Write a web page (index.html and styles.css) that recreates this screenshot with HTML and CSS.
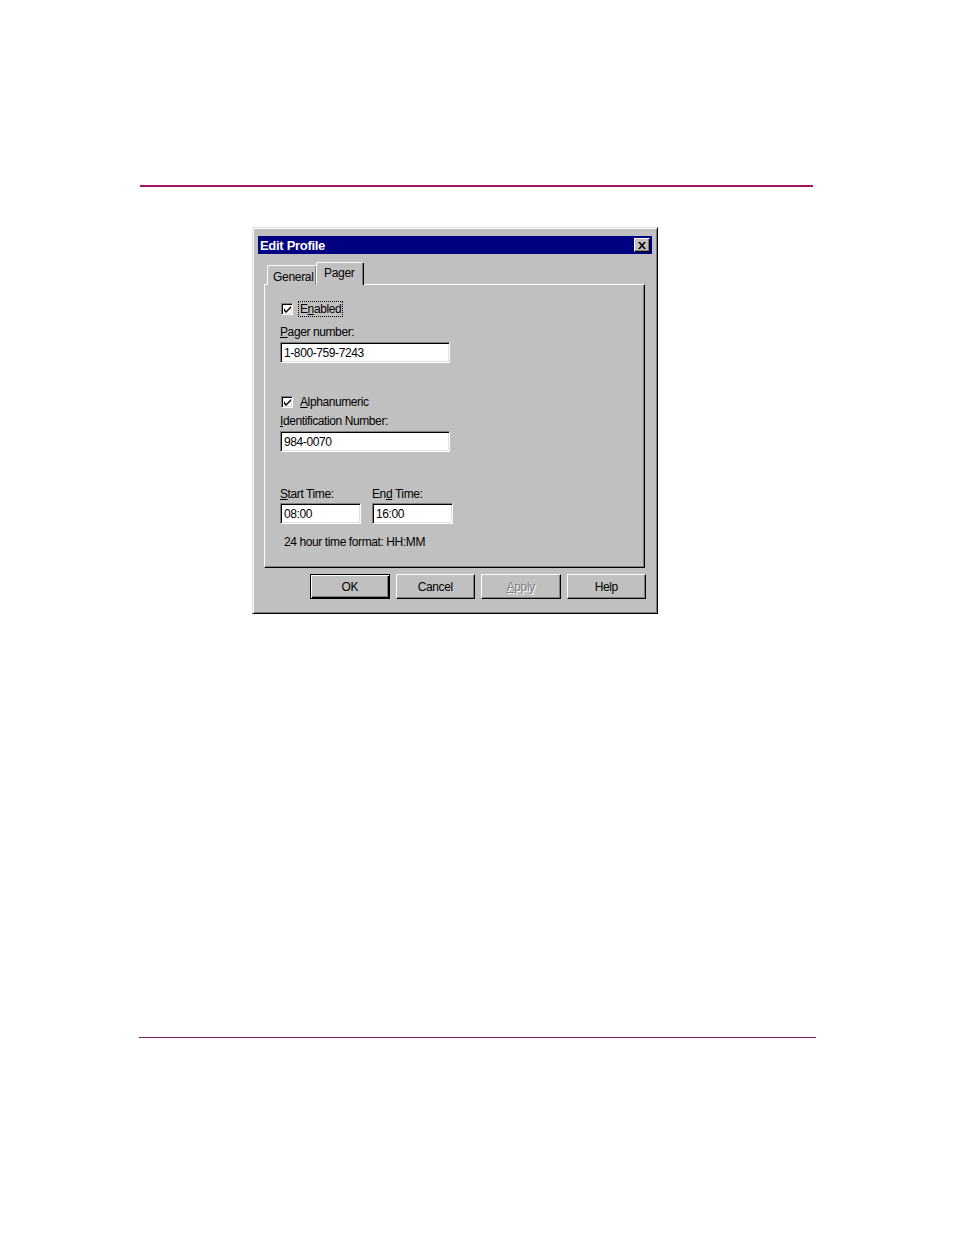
FILE: index.html
```html
<!DOCTYPE html>
<html>
<head>
<meta charset="utf-8">
<title>Edit Profile</title>
<link rel="stylesheet" href="styles.css">
</head>
<body>
<div class="page">
  <div class="rule-top"></div>
  <div class="dialog">
    <div class="titlebar">
      <span class="title">Edit Profile</span>
      <span class="close"><svg width="8" height="7" viewBox="0 0 8 7"><path d="M0 0h2l2 2.2L6 0h2L5 3.5 8 7H6L4 4.8 2 7H0l3-3.5z" fill="#000"/></svg></span>
    </div>
    <div class="tabs">
      <div class="tab">General</div>
      <div class="tab active">Pager</div>
    </div>
    <div class="panel">
      <div class="check-row">
        <span class="checkbox"><svg width="7" height="7" viewBox="0 0 7 7"><path d="M0 2v3l2 2 5-5V0L2 5z" fill="#000"/></svg></span>
        <span class="check-label focus">E<u>n</u>abled</span>
      </div>
      <div class="label l-pager"><u>P</u>ager number:</div>
      <div class="field wide f-pager">1-800-759-7243</div>
      <div class="check-row r-alpha">
        <span class="checkbox"><svg width="7" height="7" viewBox="0 0 7 7"><path d="M0 2v3l2 2 5-5V0L2 5z" fill="#000"/></svg></span>
        <span class="check-label"><u>A</u>lphanumeric</span>
      </div>
      <div class="label l-ident"><u>I</u>dentification Number:</div>
      <div class="field wide f-ident">984-0070</div>
      <div class="times">
        <div class="time-col">
          <div class="label"><u>S</u>tart Time:</div>
          <div class="field short">08:00</div>
        </div>
        <div class="time-col">
          <div class="label">En<u>d</u> Time:</div>
          <div class="field short">16:00</div>
        </div>
      </div>
      <div class="hint">24 hour time format: HH:MM</div>
    </div>
    <div class="buttons">
      <div class="btn default">OK</div>
      <div class="btn">Cancel</div>
      <div class="btn disabled"><u>A</u>pply</div>
      <div class="btn">Help</div>
    </div>
  </div>
  <div class="rule-bottom"></div>
</div>
</body>
</html>
```
FILE: styles.css
```css
html, body {
  margin: 0;
  padding: 0;
  background: #ffffff;
}

.page {
  padding-top: 185px;
  font-family: "Liberation Sans", Arial, sans-serif;
}

.rule-top {
  margin-left: 140px;
  width: 673px;
  height: 2px;
  background: #a3145f;
}

.dialog {
  box-sizing: border-box;
  margin-top: 40px;
  margin-left: 252px;
  width: 406px;
  height: 387px;
  background: #c0c0c0;
  border-style: solid;
  border-width: 1px;
  border-color: #dfdfdf #000000 #000000 #dfdfdf;
  box-shadow: inset 1px 1px #ffffff, inset -1px -1px #808080;
  padding: 8px 5px 0 5px;
}

.titlebar {
  height: 18px;
  background: #000080;
  display: flex;
  align-items: center;
  justify-content: space-between;
  padding: 0 2px 0 2px;
}

.title {
  color: #ffffff;
  font-weight: bold;
  font-size: 13px;
  letter-spacing: -0.3px;
}

.close {
  box-sizing: border-box;
  width: 16px;
  height: 14px;
  background: #c0c0c0;
  border-style: solid;
  border-width: 1px;
  border-color: #ffffff #000000 #000000 #ffffff;
  box-shadow: inset -1px -1px #808080;
  display: flex;
  align-items: center;
  justify-content: center;
}

.tabs {
  display: flex;
  align-items: flex-end;
  height: 22px;
  margin-top: 9px;
  padding-left: 9px;
  margin-bottom: -1px;
}

.tab {
  box-sizing: border-box;
  position: relative;
  height: 20px;
  padding: 2px 5px 0 5px;
  font-size: 12px;
  letter-spacing: -0.3px;
  color: #000;
  display: flex;
  align-items: center;
  border-style: solid;
  border-width: 1px 1px 0 1px;
  border-color: #ffffff #000000 transparent #ffffff;
  box-shadow: inset -1px 0 #808080;
  border-radius: 2px 2px 0 0;
  background: #c0c0c0;
}

.tab:first-child {
  width: 50px;
}

.tab.active {
  height: 23px;
  width: 48px;
  padding-left: 7px;
  align-items: flex-start;
  padding-top: 3px;
  z-index: 1;
  margin-left: -1px;
}

.panel {
  box-sizing: border-box;
  width: 381px;
  margin-left: 6px;
  height: 284px;
  border-style: solid;
  border-width: 1px;
  border-color: #ffffff #000000 #000000 #ffffff;
  box-shadow: inset -1px -1px #808080;
  padding: 16px 0 0 15px;
  font-size: 12px;
  letter-spacing: -0.4px;
  color: #000;
}

.check-row {
  height: 16px;
  display: flex;
  align-items: center;
  padding-left: 1px;
}

.checkbox {
  box-sizing: border-box;
  width: 12px;
  height: 12px;
  background: #ffffff;
  border-style: solid;
  border-width: 1px;
  border-color: #808080 #ffffff #ffffff #808080;
  box-shadow: inset 1px 1px #000000, inset -1px -1px #dfdfdf;
  display: flex;
  align-items: center;
  justify-content: center;
  margin-right: 5px;
}

.check-label {
  padding: 0 1px;
  line-height: 14px;
  border: 1px dotted transparent;
}

.check-label.focus {
  border-color: #000;
}

.label {
  line-height: 14px;
  height: 14px;
}

.l-pager {
  margin-top: 8px;
}

.field {
  box-sizing: border-box;
  height: 21px;
  margin-top: 3px;
  background: #ffffff;
  border-style: solid;
  border-width: 1px;
  border-color: #808080 #ffffff #ffffff #808080;
  box-shadow: inset 1px 1px #000000, inset -1px -1px #dfdfdf;
  padding-left: 3px;
  display: flex;
  align-items: center;
}

.wide {
  width: 170px;
}

.short {
  width: 81px;
  margin-top: 2px;
}

.r-alpha {
  margin-top: 31px;
}

.l-ident {
  margin-top: 4px;
}

.f-ident {
  margin-top: 3px;
}

.times {
  display: flex;
  gap: 11px;
  margin-top: 35px;
}

.hint {
  margin-top: 11px;
  padding-left: 4px;
  line-height: 14px;
}

.buttons {
  display: flex;
  justify-content: flex-end;
  gap: 6px;
  margin-top: 6px;
  padding-right: 6px;
}

.btn {
  box-sizing: border-box;
  width: 79.5px;
  height: 25px;
  font-size: 12px;
  letter-spacing: -0.4px;
  color: #000;
  display: flex;
  align-items: center;
  justify-content: center;
  border-style: solid;
  border-width: 1px;
  border-color: #ffffff #000000 #000000 #ffffff;
  box-shadow: inset -1px -1px #808080;
}

.btn.default {
  border-color: #000000;
  box-shadow: inset 1px 1px #ffffff, inset -1px -1px #000000, inset -2px -2px #808080;
}

.btn.disabled {
  color: #808080;
  text-shadow: 1px 1px #ffffff;
}

.rule-bottom {
  margin-top: 423px;
  margin-left: 139px;
  width: 677px;
  height: 1px;
  background: #7d1a5c;
}
```
